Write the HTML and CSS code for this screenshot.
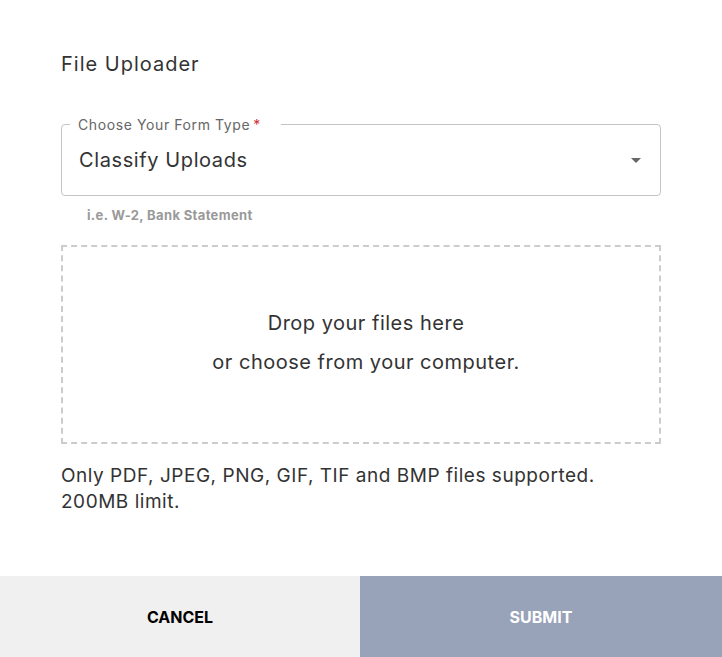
FILE: index.html
```html
<!DOCTYPE html>
<html lang="en">
<head>
    <meta charset="UTF-8">
    <meta name="viewport" content="width=device-width, initial-scale=1.0">
    <title>File Uploader</title>
    <link rel="stylesheet" href="styles.css">
</head>
<body>
    <div class="dialog">
        <div class="dialog-body">
            <h2 class="dialog-title">File Uploader</h2>

            <div class="select-field">
                <span class="select-label">Choose Your Form Type<span class="required">*</span></span>
                <span class="select-value">Classify Uploads</span>
                <span class="select-arrow"></span>
            </div>
            <p class="helper-text">i.e. W-2, Bank Statement</p>

            <div class="dropzone">
                <p>Drop your files here</p>
                <p>or choose from your computer.</p>
            </div>

            <p class="file-note">Only PDF, JPEG, PNG, GIF, TIF and BMP files supported.<br>200MB limit.</p>
        </div>

        <div class="dialog-actions">
            <button class="btn btn-cancel">Cancel</button>
            <button class="btn btn-submit">Submit</button>
        </div>
    </div>
</body>
</html>
```

FILE: styles.css
```css
body {
    margin: 0;
    background: #fff;
    font-family: 'Inter', 'Noto Sans', sans-serif;
    color: #333;
}

.dialog {
    height: 657px;
    display: flex;
    flex-direction: column;
}

.dialog-body {
    flex: 1;
    padding: 50px 61px 0;
}

.dialog-title {
    margin: 0;
    font-size: 20px;
    font-weight: 400;
    line-height: 28px;
    letter-spacing: 1px;
    color: #333;
}

/* ===== SELECT ===== */
.select-field {
    position: relative;
    margin-top: 46px;
    height: 70px;
    border: 1px solid #c4c4c4;
    border-radius: 4px;
    display: flex;
    align-items: center;
    padding: 0 18px 0 17px;
}

.select-label {
    position: absolute;
    top: -9px;
    left: 8px;
    padding: 0 20px 0 8px;
    background: #fff;
    font-size: 14px;
    line-height: 18px;
    letter-spacing: 0.6px;
    color: #666;
}

.required {
    color: #d32f2f;
    margin-left: 3px;
}

.select-value {
    flex: 1;
    font-size: 20px;
    letter-spacing: 0.6px;
    color: #333;
    padding-bottom: 1px;
}

.select-arrow {
    width: 0;
    height: 0;
    border-left: 5px solid transparent;
    border-right: 5px solid transparent;
    border-top: 5px solid #666;
    margin-right: 1px;
}

.helper-text {
    margin: 10px 0 0 26px;
    font-size: 13px;
    font-weight: 700;
    line-height: 18px;
    letter-spacing: 0.35px;
    color: #999;
}

/* ===== DROPZONE ===== */
.dropzone {
    margin-top: 21px;
    height: 199px;
    box-sizing: border-box;
    padding: 0 0 4px 10px;
    border: 2px dashed #ccc;
    display: flex;
    flex-direction: column;
    justify-content: center;
    align-items: center;
    text-align: center;
}

.dropzone p {
    margin: 0;
    font-size: 20px;
    line-height: 39px;
    letter-spacing: 0.5px;
    color: #333;
}

.file-note {
    margin: 19px 0 0;
    font-size: 19px;
    line-height: 26px;
    letter-spacing: 0.53px;
    color: #333;
}

/* ===== ACTIONS ===== */
.dialog-actions {
    display: grid;
    grid-template-columns: 360px 1fr;
    height: 81px;
}

.btn {
    border: none;
    font-family: inherit;
    font-size: 16px;
    font-weight: 700;
    text-transform: uppercase;
    cursor: pointer;
}

.btn-cancel {
    background: #f0f0f0;
    color: #000;
}

.btn-submit {
    background: #98a2b9;
    color: #fff;
}
```
